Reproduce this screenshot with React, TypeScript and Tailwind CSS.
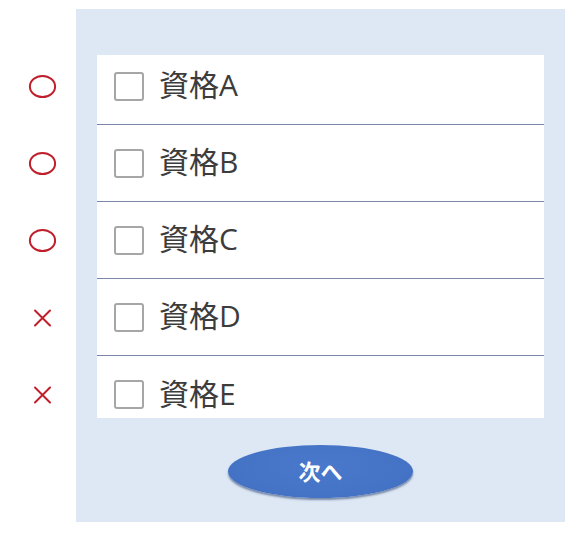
import React from "react";

const items = [
  { label: "資格A", mark: "o" },
  { label: "資格B", mark: "o" },
  { label: "資格C", mark: "o" },
  { label: "資格D", mark: "x" },
  { label: "資格E", mark: "x" },
];

const font = { fontFamily: '"Noto Sans CJK JP", "Noto Sans", sans-serif' };
const labelFont = { fontFamily: '"Open Sans", "Noto Sans CJK JP", sans-serif' };

function Mark({ kind }: { kind: string }) {
  if (kind === "o") {
    return (
      <svg width="29" height="25" viewBox="0 0 29 25">
        <ellipse cx="14.5" cy="12.5" rx="12.6" ry="10.6" fill="none" stroke="#c01e2a" strokeWidth="2" />
      </svg>
    );
  }
  return (
    <svg width="19" height="18" viewBox="0 0 19 18">
      <path d="M2 1.5 L17 16.5 M17 1.5 L2 16.5" stroke="#c01e2a" strokeWidth="2" strokeLinecap="round" />
    </svg>
  );
}

export default function App() {
  return (
    <div className="w-[576px] h-[535px] bg-white flex" style={font}>
      <div className="w-[76px] pt-[48px] flex flex-col">
        {items.map((it) => (
          <div key={it.label} className="h-[77px] flex items-center justify-center pl-[8px]">
            <Mark kind={it.mark} />
          </div>
        ))}
      </div>
      <div className="mt-[9px] w-[489px] h-[513px] bg-[#dde8f4] flex flex-col items-center">
        <div className="mt-[46px] w-[447px] h-[363px] bg-white overflow-hidden">
          <div className="-mt-[7px]">
            {items.map((it, i) => (
              <div
                key={it.label}
                className={
                  "h-[77px] flex items-center pl-[17px] " +
                  (i < items.length - 1 ? "border-b border-[#7d88a8]" : "")
                }
              >
                <div className="w-[30px] h-[29px] rounded-[3px] border-2 border-[#a6a6a6] bg-white" />
                <span
                  className="ml-[15px] -mt-[2px] text-[30px] font-normal text-[#3c3c3c] leading-none"
                  style={labelFont}
                >
                  {it.label}
                </span>
              </div>
            ))}
          </div>
        </div>
        <button
          className="mt-[27px] w-[185px] h-[53px] rounded-[50%] flex items-center justify-center text-white font-bold text-[22px] leading-none"
          style={{
            background: "radial-gradient(ellipse at 50% 40%, #4a78cc 0%, #4472c4 70%, #3a63ad 100%)",
            boxShadow: "0 2px 2px rgba(40,60,110,0.55)",
          }}
        >
          <span className="-mt-[4px]">次へ</span>
        </button>
      </div>
    </div>
  );
}
